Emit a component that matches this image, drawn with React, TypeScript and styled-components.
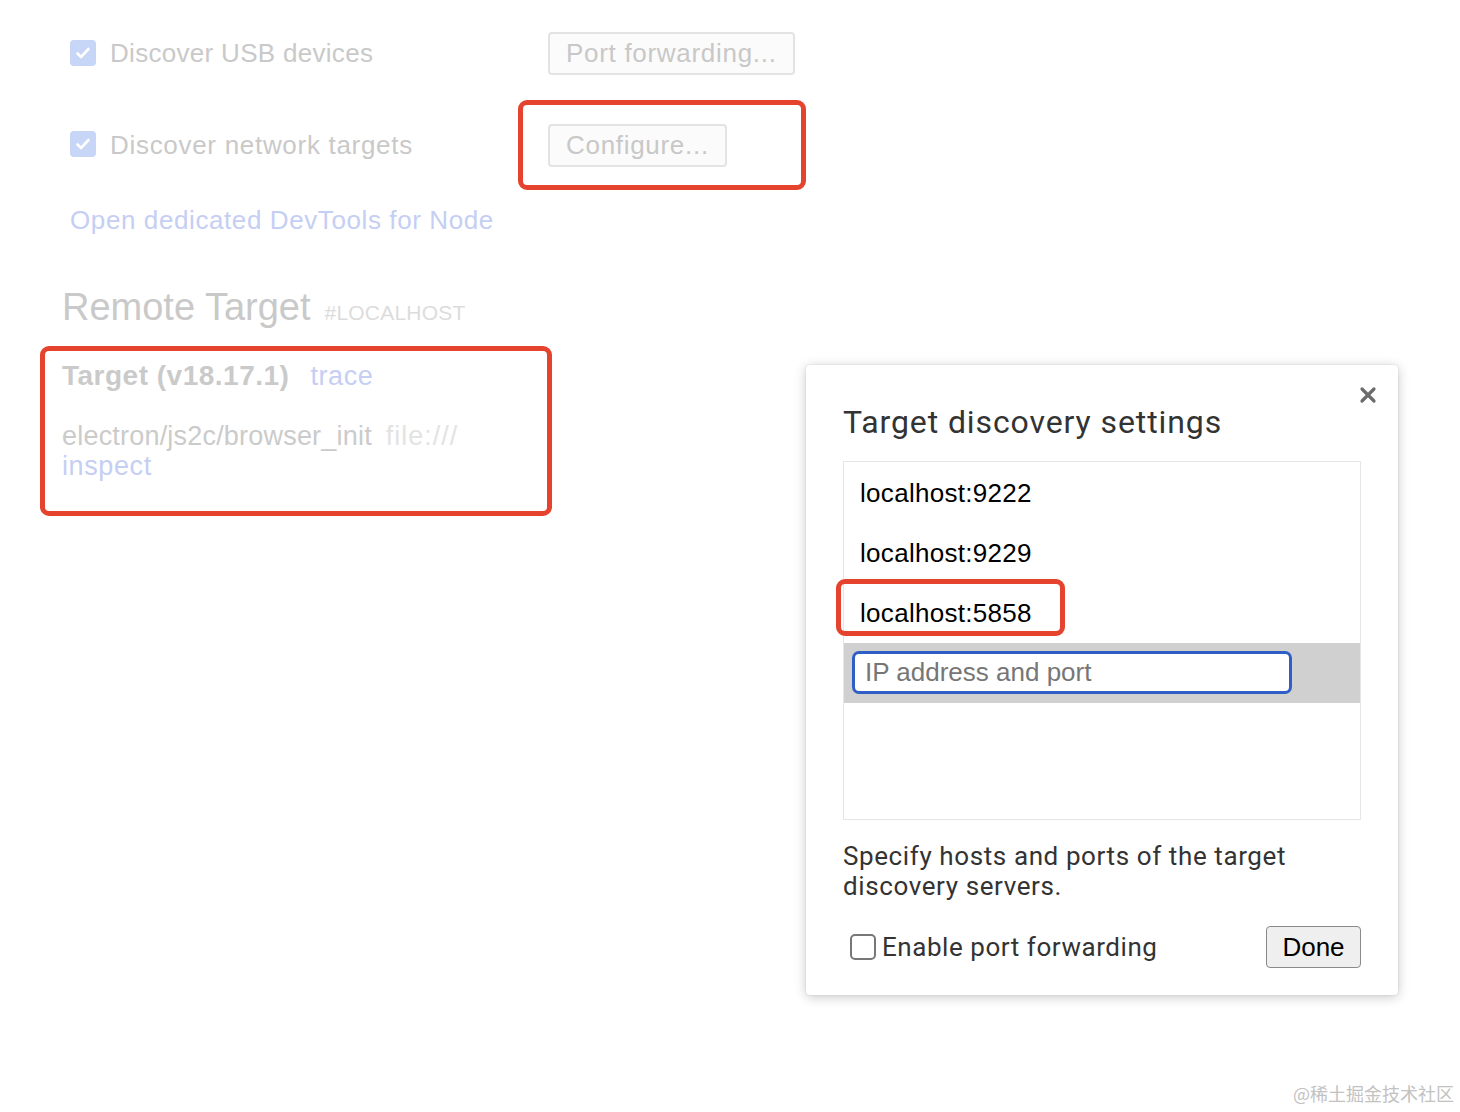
import styled, { createGlobalStyle } from 'styled-components'

const Global = createGlobalStyle`
  html, body { margin: 0; padding: 0; background: #ffffff; }
  body { font-family: "Liberation Sans", Arial, sans-serif; }
  *, *::before, *::after { box-sizing: border-box; }
`

const Page = styled.div`
  position: relative;
  width: 1460px;
  height: 1112px;
  overflow: hidden;
  background: #fff;
`

const Settings = styled.div`
  padding: 32px 0 0 70px;
  display: flex;
  flex-direction: column;
  align-items: flex-start;
`

const Row = styled.div<{ top?: number; height: number }>`
  display: flex;
  align-items: center;
  height: ${({ height }) => height}px;
  margin-top: ${({ top }) => top || 0}px;
`

const Option = styled.label<{ width: number; spacing?: number }>`
  display: flex;
  align-items: center;
  gap: 14px;
  width: ${({ width }) => width}px;
  font-size: 26px;
  color: #c9c9c9;
  letter-spacing: ${({ spacing }) => spacing ?? 0.3}px;
`

const CheckedBox = styled.span`
  width: 26px;
  height: 26px;
  margin-top: -2px;
  border-radius: 4px;
  background: #c7d5f6;
  display: flex;
  align-items: center;
  justify-content: center;
`

const FadedButton = styled.button`
  height: 43px;
  padding: 0 16px;
  font-family: inherit;
  font-size: 26px;
  color: #c8c8c8;
  background: #fbfbfb;
  border: 2px solid #e3e3e3;
  border-radius: 4px;
  letter-spacing: 0.7px;
`

const Highlight = styled.div`
  border: 5px solid #e5432d;
  border-radius: 9px;
`

const ConfigureBox = styled(Highlight)`
  width: 288px;
  height: 90px;
  padding: 19px 0 0 25px;
`

const NodeLink = styled.a`
  margin-top: 15px;
  font-size: 26px;
  line-height: 30px;
  color: #c5cef3;
  letter-spacing: 0.6px;
`

const Remote = styled.div`
  margin: 50px 0 0 -8px;
  display: flex;
  align-items: baseline;
  gap: 14px;
  height: 44px;
  line-height: 44px;
`

const RemoteTitle = styled.span`
  font-size: 38px;
  color: #c9c9c9;
`

const RemoteTag = styled.span`
  font-size: 21px;
  color: #dcdcdc;
  text-transform: uppercase;
  letter-spacing: 0.2px;
`

const TargetBox = styled(Highlight)`
  margin: 17px 0 0 -30px;
  width: 512px;
  padding: 9px 0 30px 17px;
`

const TargetHead = styled.div`
  display: flex;
  align-items: baseline;
  gap: 21px;
  height: 32px;
  line-height: 32px;
`

const TargetName = styled.span`
  font-size: 28px;
  font-weight: 700;
  color: #cacaca;
  letter-spacing: 0.5px;
`

const FadedLink = styled.span`
  font-size: 27px;
  color: #c5cef3;
  letter-spacing: 0.6px;
`

const TargetLine = styled.div<{ top?: number }>`
  margin-top: ${({ top }) => top || 0}px;
  display: flex;
  gap: 14px;
  font-size: 27px;
  line-height: 30px;
  color: #cbcbcb;
  letter-spacing: 0.2px;
`

const FileUrl = styled.span`
  color: #e3e3e3;
  letter-spacing: 1px;
`

const Dialog = styled.div`
  position: absolute;
  left: 806px;
  top: 365px;
  width: 592px;
  height: 630px;
  background: #fff;
  border-radius: 4px;
  box-shadow: 0 2px 12px rgba(0, 0, 0, 0.22), 0 0 2px rgba(0, 0, 0, 0.12);
  padding: 38px 37px 27px 37px;
  display: flex;
  flex-direction: column;
  font-family: Roboto, "Liberation Sans", sans-serif;
  color: #333;
`

const Close = styled.button`
  position: absolute;
  right: 21px;
  top: 21px;
  width: 18px;
  height: 18px;
  padding: 0;
  border: none;
  background: none;
`

const DialogTitle = styled.h2`
  margin: 0;
  font-size: 32px;
  font-weight: 400;
  line-height: 38px;
  letter-spacing: 0.9px;
  color: #333;
`

const HostList = styled.div`
  margin-top: 20px;
  height: 359px;
  border: 1px solid #e6e6e6;
  padding-top: 1px;
  display: flex;
  flex-direction: column;
`

const HostItem = styled.div<{ marked?: boolean }>`
  position: relative;
  height: 60px;
  padding-left: 16px;
  display: flex;
  align-items: center;
  font-family: "Liberation Sans", Arial, sans-serif;
  font-size: 26px;
  letter-spacing: 0.3px;
  color: #000;

  ${({ marked }) =>
    marked &&
    `
    &::after {
      content: '';
      position: absolute;
      left: -8px;
      top: -4px;
      width: 229px;
      height: 57px;
      border: 5px solid #e5432d;
      border-radius: 9px;
    }
  `}
`

const EditRow = styled.div`
  height: 60px;
  background: #d0d0d0;
  padding: 8px 0 0 8px;
`

const HostInput = styled.input`
  width: 440px;
  height: 43px;
  border: 3px solid #2f5fc5;
  border-radius: 7px;
  padding: 0 10px;
  font-family: "Liberation Sans", Arial, sans-serif;
  font-size: 26px;
  color: #000;
  outline: none;
  background: #fff;

  &::placeholder {
    color: #767676;
  }
`

const Help = styled.p`
  margin: 21px 0 0;
  font-size: 26px;
  line-height: 30px;
  letter-spacing: 0.6px;
  color: #333;
`

const Footer = styled.div`
  margin-top: auto;
  display: flex;
  align-items: center;
  justify-content: space-between;
  height: 42px;
`

const ForwardOption = styled.label`
  display: flex;
  align-items: center;
  gap: 6px;
  margin-left: 7px;
  font-size: 26px;
  letter-spacing: 0.55px;
  color: #333;
`

const EmptyBox = styled.span`
  width: 26px;
  height: 26px;
  border: 2px solid #777;
  border-radius: 5px;
  background: #fff;
`

const DoneButton = styled.button`
  width: 95px;
  height: 42px;
  border: 1.5px solid #8a8a8a;
  border-radius: 4px;
  background: #efefef;
  font-family: "Liberation Sans", Arial, sans-serif;
  font-size: 26px;
  color: #000;
  padding: 0;
`

const Watermark = styled.div`
  position: absolute;
  right: 6px;
  bottom: 6px;
  font-family: "Noto Sans CJK SC", sans-serif;
  font-size: 18px;
  color: #c2c2c2;
`

const Check = () => (
  <svg width="18" height="18" viewBox="0 0 18 18">
    <path d="M3.5 9.5l3.5 3.5 7.5-8" fill="none" stroke="#fff" strokeWidth="2.6" strokeLinecap="round" strokeLinejoin="round" />
  </svg>
)

export default function App() {
  return (
    <Page>
      <Global />
      <Settings>
        <Row height={43}>
          <Option width={478}>
            <CheckedBox><Check /></CheckedBox>
            Discover USB devices
          </Option>
          <FadedButton>Port forwarding...</FadedButton>
        </Row>
        <Row top={25} height={90}>
          <Option width={448} spacing={0.7}>
            <CheckedBox><Check /></CheckedBox>
            Discover network targets
          </Option>
          <ConfigureBox>
            <FadedButton>Configure...</FadedButton>
          </ConfigureBox>
        </Row>
        <NodeLink>Open dedicated DevTools for Node</NodeLink>
        <Remote>
          <RemoteTitle>Remote Target</RemoteTitle>
          <RemoteTag>#localhost</RemoteTag>
        </Remote>
        <TargetBox>
          <TargetHead>
            <TargetName>Target (v18.17.1)</TargetName>
            <FadedLink>trace</FadedLink>
          </TargetHead>
          <TargetLine top={29}>
            electron/js2c/browser_init <FileUrl>file:///</FileUrl>
          </TargetLine>
          <TargetLine>
            <FadedLink>inspect</FadedLink>
          </TargetLine>
        </TargetBox>
      </Settings>

      <Dialog>
        <Close aria-label="Close">
          <svg width="18" height="18" viewBox="0 0 18 18">
            <path d="M3 3l12 12M15 3L3 15" stroke="#6b6b6b" strokeWidth="3.2" strokeLinecap="round" />
          </svg>
        </Close>
        <DialogTitle>Target discovery settings</DialogTitle>
        <HostList>
          <HostItem>localhost:9222</HostItem>
          <HostItem>localhost:9229</HostItem>
          <HostItem marked>localhost:5858</HostItem>
          <EditRow>
            <HostInput placeholder="IP address and port" autoFocus />
          </EditRow>
        </HostList>
        <Help>
          Specify hosts and ports of the target
          <br />
          discovery servers.
        </Help>
        <Footer>
          <ForwardOption>
            <EmptyBox />
            Enable port forwarding
          </ForwardOption>
          <DoneButton>Done</DoneButton>
        </Footer>
      </Dialog>

      <Watermark>@稀土掘金技术社区</Watermark>
    </Page>
  )
}
